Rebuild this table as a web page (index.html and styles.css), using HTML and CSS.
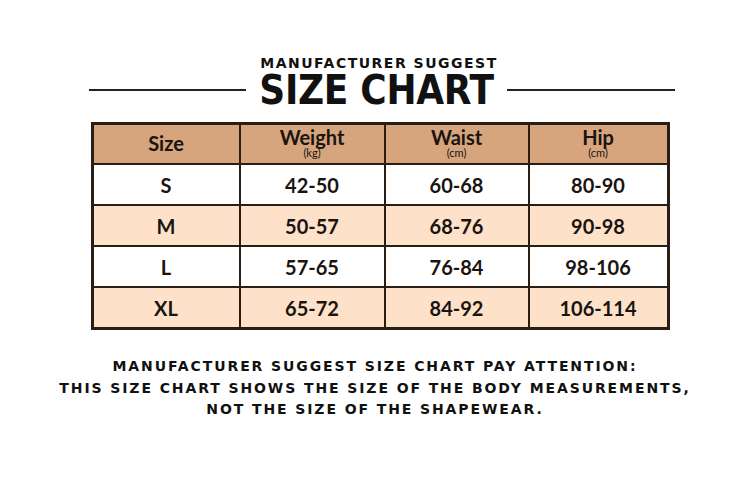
FILE: index.html
```html
<!DOCTYPE html>
<html>
<head>
<meta charset="utf-8">
<link rel="stylesheet" href="styles.css">
</head>
<body>
<div class="page">
  <header class="head">
    <div class="sub">MANUFACTURER SUGGEST</div>
    <div class="title-row">
      <span class="rule left"></span>
      <h1 class="title">SIZE CHART</h1>
      <span class="rule right"></span>
    </div>
  </header>
  <table class="chart">
    <thead>
      <tr>
        <th><span class="h">Size</span></th>
        <th><span class="h">Weight</span><span class="unit">(kg)</span></th>
        <th><span class="h">Waist</span><span class="unit">(cm)</span></th>
        <th><span class="h">Hip</span><span class="unit">(cm)</span></th>
      </tr>
    </thead>
    <tbody>
      <tr class="w"><td>S</td><td>42-50</td><td>60-68</td><td>80-90</td></tr>
      <tr class="p"><td>M</td><td>50-57</td><td>68-76</td><td>90-98</td></tr>
      <tr class="w"><td>L</td><td>57-65</td><td>76-84</td><td>98-106</td></tr>
      <tr class="p"><td>XL</td><td>65-72</td><td>84-92</td><td>106-114</td></tr>
    </tbody>
  </table>
  <p class="note">MANUFACTURER SUGGEST SIZE CHART PAY ATTENTION:<br>THIS SIZE CHART SHOWS THE SIZE OF THE BODY MEASUREMENTS,<br>NOT THE SIZE OF THE SHAPEWEAR.</p>
</div>
</body>
</html>
```
FILE: styles.css
```css
html, body {
  margin: 0;
  padding: 0;
  background: #ffffff;
}
.page {
  width: 750px;
  height: 491px;
  display: flex;
  flex-direction: column;
  align-items: center;
  color: #111;
}
.head {
  margin-top: 55px;
  margin-left: 14px;
  display: flex;
  flex-direction: column;
  align-items: center;
}
.sub {
  font-family: "DejaVu Sans", sans-serif;
  font-weight: bold;
  font-size: 14px;
  letter-spacing: 1.5px;
  line-height: 16px;
  margin-right: 6px;
  color: #111;
}
.title-row {
  display: flex;
  align-items: center;
  gap: 13px;
  margin-top: 1px;
}
.rule {
  display: block;
  height: 1.5px;
  background: #222;
}
.rule.left { width: 157px; }
.rule.right { width: 168px; }
.title {
  margin: 0;
  font-family: "DejaVu Sans Condensed", "DejaVu Sans", sans-serif;
  font-stretch: condensed;
  font-weight: bold;
  font-size: 40px;
  line-height: 36px;
  letter-spacing: -0.3px;
  color: #111;
}
.chart {
  margin-top: 14px;
  margin-left: 10px;
  border-collapse: collapse;
  border: 3px solid #2a1d14;
  font-family: "Lato", sans-serif;
  font-weight: bold;
  color: #1a1410;
}
.chart th, .chart td {
  border: 2px solid #2a1d14;
  text-align: center;
  padding: 0;
}
.chart th {
  background: #d6a47d;
  height: 38px;
  font-weight: bold;
  vertical-align: middle;
  line-height: 1;
}
.chart th:nth-child(1) { width: 145px; }
.chart th:nth-child(2) { width: 143px; }
.chart th:nth-child(3) { width: 142px; }
.chart th:nth-child(4) { width: 137px; }
.h {
  display: block;
  font-size: 20px;
  line-height: 19px;
  padding-bottom: 1px;
}
.unit {
  display: block;
  font-size: 11px;
  font-weight: normal;
  line-height: 10px;
  padding-bottom: 3px;
}
.chart th:first-child .h {
  padding: 0 0 2px;
}
.chart td {
  height: 39px;
  font-size: 20px;
}
.chart tr.w td { background: #ffffff; }
.chart tr.p td { background: #fde1c8; }
.note {
  margin: 26px 0 0;
  text-align: center;
  font-family: "DejaVu Sans", sans-serif;
  font-weight: bold;
  font-size: 14px;
  line-height: 21.5px;
  letter-spacing: 1.9px;
  color: #111;
}
```
